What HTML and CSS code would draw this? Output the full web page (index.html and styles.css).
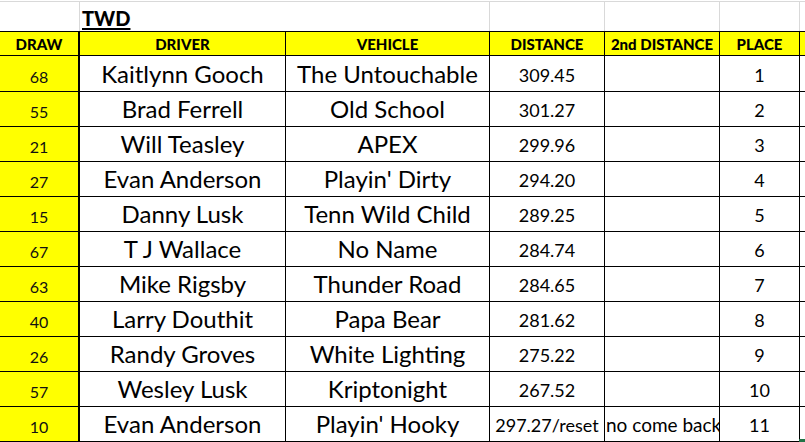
FILE: index.html
```html
<!DOCTYPE html>
<html>
<head>
<meta charset="utf-8">
<link rel="stylesheet" href="styles.css">
</head>
<body>
<div class="sheet">
  <div class="top c1"></div>
  <div class="top title">TWD</div>
  <div class="top c4"></div>
  <div class="top c5"></div>
  <div class="top c6"></div>
  <div class="top c7"></div>

  <div class="hd c1">DRAW</div>
  <div class="hd c2">DRIVER</div>
  <div class="hd c3">VEHICLE</div>
  <div class="hd c4">DISTANCE</div>
  <div class="hd c5">2nd DISTANCE</div>
  <div class="hd c6">PLACE</div>
  <div class="hd c7"></div>

  <div class="cell c1 draw first">68</div><div class="cell c2 name first">Kaitlynn Gooch</div><div class="cell c3 name first">The Untouchable</div><div class="cell c4 num first">309.45</div><div class="cell c5 num first"></div><div class="cell c6 num first">1</div><div class="cell c7 first"></div>
  <div class="cell c1 draw">55</div><div class="cell c2 name">Brad Ferrell</div><div class="cell c3 name">Old School</div><div class="cell c4 num">301.27</div><div class="cell c5 num"></div><div class="cell c6 num">2</div><div class="cell c7"></div>
  <div class="cell c1 draw">21</div><div class="cell c2 name">Will Teasley</div><div class="cell c3 name">APEX</div><div class="cell c4 num">299.96</div><div class="cell c5 num"></div><div class="cell c6 num">3</div><div class="cell c7"></div>
  <div class="cell c1 draw">27</div><div class="cell c2 name">Evan Anderson</div><div class="cell c3 name">Playin' Dirty</div><div class="cell c4 num">294.20</div><div class="cell c5 num"></div><div class="cell c6 num">4</div><div class="cell c7"></div>
  <div class="cell c1 draw">15</div><div class="cell c2 name">Danny Lusk</div><div class="cell c3 name">Tenn Wild Child</div><div class="cell c4 num">289.25</div><div class="cell c5 num"></div><div class="cell c6 num">5</div><div class="cell c7"></div>
  <div class="cell c1 draw">67</div><div class="cell c2 name">T J Wallace</div><div class="cell c3 name">No Name</div><div class="cell c4 num">284.74</div><div class="cell c5 num"></div><div class="cell c6 num">6</div><div class="cell c7"></div>
  <div class="cell c1 draw">63</div><div class="cell c2 name">Mike Rigsby</div><div class="cell c3 name">Thunder Road</div><div class="cell c4 num">284.65</div><div class="cell c5 num"></div><div class="cell c6 num">7</div><div class="cell c7"></div>
  <div class="cell c1 draw">40</div><div class="cell c2 name">Larry Douthit</div><div class="cell c3 name">Papa Bear</div><div class="cell c4 num">281.62</div><div class="cell c5 num"></div><div class="cell c6 num">8</div><div class="cell c7"></div>
  <div class="cell c1 draw">26</div><div class="cell c2 name">Randy Groves</div><div class="cell c3 name">White Lighting</div><div class="cell c4 num">275.22</div><div class="cell c5 num"></div><div class="cell c6 num">9</div><div class="cell c7"></div>
  <div class="cell c1 draw">57</div><div class="cell c2 name">Wesley Lusk</div><div class="cell c3 name">Kriptonight</div><div class="cell c4 num">267.52</div><div class="cell c5 num"></div><div class="cell c6 num">10</div><div class="cell c7"></div>
  <div class="cell c1 draw">10</div><div class="cell c2 name">Evan Anderson</div><div class="cell c3 name">Playin' Hooky</div><div class="cell c4 num over">297.27/reset</div><div class="cell c5 num left">no come back</div><div class="cell c6 num">11</div><div class="cell c7"></div>
</div>
<div class="handle"></div>
</body>
</html>
```
FILE: styles.css
```css
html, body {
  margin: 0;
  padding: 0;
  background: #ffffff;
  width: 805px;
  height: 442px;
  overflow: hidden;
}
body {
  position: relative;
  font-family: Lato, "Open Sans", sans-serif;
  color: #000;
}
.sheet {
  display: grid;
  grid-template-columns: 80px 206px 204px 115px 115px 80px 1fr;
  grid-template-rows: 29px 25px 36px repeat(10, 35px);
  margin-top: 1px;
  border-top: 1px solid #d9d9d9;
}
.sheet > div {
  box-sizing: border-box;
  display: flex;
  align-items: flex-end;
  justify-content: center;
  white-space: nowrap;
  overflow: hidden;
}
.sheet > .top {
  border-right: 1px solid #d9d9d9;
}
.sheet > .top.c7 { border-right: none; }
.sheet > .title {
  grid-column: 2 / 4;
  justify-content: flex-start;
  padding-left: 2px;
  padding-bottom: 1px;
  font-weight: 900;
  font-size: 20px;
  text-decoration: underline;
  text-decoration-thickness: 2px;
  text-underline-offset: 2px;
}
.sheet > .hd {
  background: #ffff00;
  border-top: 1px solid #000;
  border-bottom: 1px solid #000;
  border-right: 1px solid #000;
  font-weight: 900;
  font-size: 15px;
  padding-bottom: 2px;
}
.sheet > .hd.c7 { border-right: none; }
.sheet > .hd.c1, .sheet > .cell.c1 { border-right-width: 2px; }
.sheet > .cell {
  border-bottom: 1px solid #000;
  border-right: 1px solid #000;
}
.sheet > .cell.c1 { background: #ffff00; }
.sheet > .cell.c7 { border-right: none; }
.sheet > .draw {
  font-size: 16px;
  padding-bottom: 5px;
  color: #111;
}
.sheet > .name {
  font-size: 24px;
  padding-bottom: 3px;
}
.sheet > .num {
  font-size: 18px;
  padding-bottom: 5px;
}
.sheet > .over { overflow: visible; }
.sheet > .left {
  justify-content: flex-start;
  padding-left: 1px;
  font-size: 19px;
}
.handle {
  position: absolute;
  left: 799px;
  top: 439px;
  width: 6px;
  height: 3px;
  background: #217346;
}
```
